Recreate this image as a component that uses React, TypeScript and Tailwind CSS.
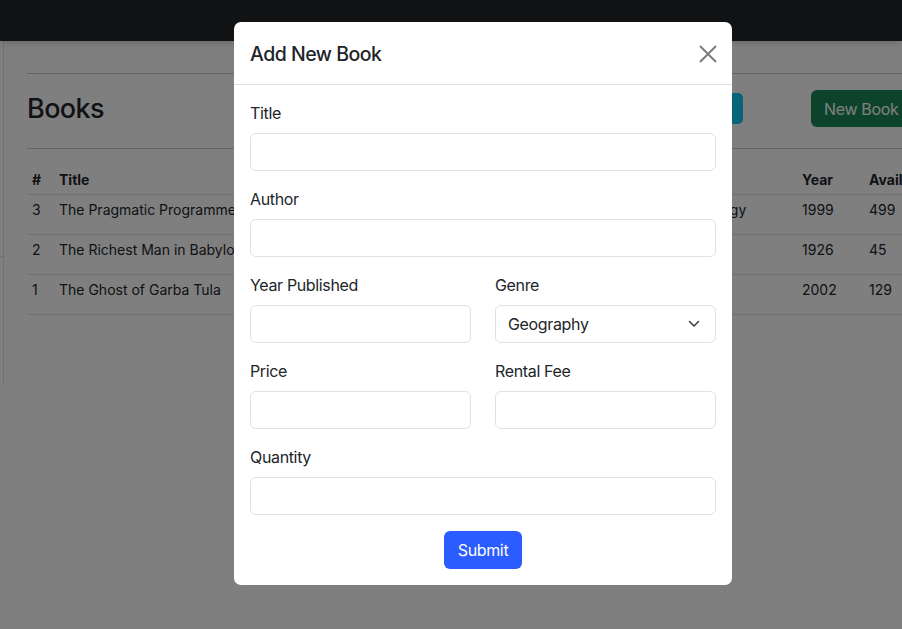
import React from "react";

const books = [
  { id: 3, title: "The Pragmatic Programmer", author: "Andrew Hunt", genre: "Technology", year: 1999, available: 499 },
  { id: 2, title: "The Richest Man in Babylon", author: "George S. Clason", genre: "Finance", year: 1926, available: 45 },
  { id: 1, title: "The Ghost of Garba Tula", author: "Yusuf Dawood", genre: "Fiction", year: 2002, available: 129 },
];

const Field: React.FC<{ label: string; children?: React.ReactNode }> = ({ label, children }) => (
  <div className="mb-4 flex-1 min-w-0">
    <label className="block mb-2 text-[16px] leading-6 tracking-[-0.35px] text-[#212529]">{label}</label>
    {children ?? (
      <input
        type="text"
        className="block w-full h-[38px] px-3 border border-[#dee2e6] rounded-[6px] bg-white outline-none"
      />
    )}
  </div>
);

export default function App() {
  return (
    <div
      className="relative w-[902px] h-[629px] overflow-hidden bg-white text-[#212529]"
      style={{ fontFamily: "Inter, 'Noto Sans', sans-serif" }}
    >
      {/* Navbar */}
      <div className="h-[41px] bg-[#212529] shadow-md relative z-10"></div>

      <div className="flex">
        {/* Collapsed sidebar */}
        <div className="w-[4px] h-[344px] border-r border-[#dee2e6] shrink-0">
          <div className="h-[216px] border-b border-[#dee2e6]"></div>
        </div>

        {/* Main content */}
        <div className="pl-[23px] pt-[32px] w-[1100px] shrink-0">
          <div className="border-t border-[#c8c9ca]"></div>
          <div className="flex items-center pt-4 pb-[21px]">
            <h3 className="w-[76px] text-[27px] leading-[34px] font-medium tracking-[-0.6px]">Books</h3>
            <div className="flex items-center ml-[540px] gap-[68px]">
              <button className="h-[31px] w-[100px] rounded-[5px] bg-[#0dcaf0] text-sm text-black">Search</button>
              <button className="h-[37px] px-[13px] rounded-[6px] bg-[#198754] text-white text-[16px] tracking-[-0.35px]">New Book</button>
            </div>
          </div>
          <div className="border-t border-[#c8c9ca]"></div>

          <table className="mt-[11px] text-[14px] border-collapse w-[1000px]">
            <thead>
              <tr className="border-b border-[#dee2e6] text-left">
                <th className="w-[27px] pl-[5px] pt-[9px] pb-[4px] leading-[21px] font-bold align-bottom">#</th>
                <th className="w-[250px] pl-[5px] pt-[9px] pb-[4px] leading-[21px] font-bold align-bottom">Title</th>
                <th className="w-[360px] pl-[5px] pt-[9px] pb-[4px] leading-[21px] font-bold align-bottom">Author</th>
                <th className="w-[133px] pl-[5px] pt-[9px] pb-[4px] leading-[21px] font-bold align-bottom">Genre</th>
                <th className="w-[67px] pl-[5px] pt-[9px] pb-[4px] leading-[21px] font-bold align-bottom">Year</th>
                <th className="w-[100px] pl-[5px] pt-[9px] pb-[4px] leading-[21px] font-bold align-bottom">Available</th>
                <th className="pl-[5px] pt-[9px] pb-[4px] leading-[21px] font-bold align-bottom">Actions</th>
              </tr>
            </thead>
            <tbody>
              {books.map((b) => (
                <tr key={b.id} className="h-[40px] border-b border-[#dee2e6]">
                  <td className="pl-[5px] pt-[4px] leading-[21px] align-top">{b.id}</td>
                  <td className="pl-[5px] pt-[4px] leading-[21px] align-top">{b.title}</td>
                  <td className="pl-[5px] pt-[4px] leading-[21px] align-top">{b.author}</td>
                  <td className="pl-[5px] pt-[4px] leading-[21px] align-top">{b.genre}</td>
                  <td className="pl-[5px] pt-[4px] leading-[21px] align-top">{b.year}</td>
                  <td className="pl-[5px] pt-[4px] leading-[21px] align-top">{b.available}</td>
                  <td className="pl-[5px] pt-[4px] leading-[21px] align-top"></td>
                </tr>
              ))}
            </tbody>
          </table>
        </div>
      </div>

      {/* Backdrop */}
      <div className="fixed inset-0 bg-black/50 z-20"></div>

      {/* Modal */}
      <div className="fixed inset-0 z-30 overflow-hidden">
        <div className="ml-[234px] mt-[22px] w-[498px] bg-white rounded-[7px] overflow-hidden">
          {/* Header */}
          <div className="flex items-center justify-between h-[63px] pt-[1px] px-4 border-b border-[#dee2e6]">
            <h5 className="text-[19.5px] leading-[30px] font-medium tracking-[-0.5px]">Add New Book</h5>
            <button aria-label="Close" className="w-[18px] h-[18px] mr-[-1px] flex items-center justify-center">
              <svg width="18" height="18" viewBox="0 0 18 18" fill="none" stroke="#7a7a7a" strokeWidth="1.9">
                <path d="M1 1 L17 17 M17 1 L1 17" />
              </svg>
            </button>
          </div>

          {/* Body */}
          <div className="p-4">
            <Field label="Title" />
            <Field label="Author" />
            <div className="flex gap-6">
              <Field label="Year Published" />
              <Field label="Genre">
                <div className="relative">
                  <select
                    defaultValue="Geography"
                    className="block w-full h-[38px] pl-3 pr-9 border border-[#dee2e6] rounded-[6px] bg-white appearance-none text-[16px] tracking-[-0.35px] text-[#212529] outline-none"
                  >
                    <option>Fiction</option>
                    <option>Finance</option>
                    <option>Geography</option>
                    <option>Technology</option>
                  </select>
                  <svg
                    className="absolute right-[16px] top-[15px] pointer-events-none"
                    width="12"
                    height="8"
                    viewBox="0 0 12 8"
                    fill="none"
                    stroke="#343a40"
                    strokeWidth="1.5"
                    strokeLinecap="round"
                    strokeLinejoin="round"
                  >
                    <path d="M1.5 1.5 L6 6 L10.5 1.5" />
                  </svg>
                </div>
              </Field>
            </div>
            <div className="flex gap-6">
              <Field label="Price" />
              <Field label="Rental Fee" />
            </div>
            <Field label="Quantity" />
            <div className="flex justify-center">
              <button className="h-[38px] w-[78px] rounded-[6px] bg-[#2b5cff] text-white text-[16px] leading-6 tracking-[-0.35px]">
                Submit
              </button>
            </div>
          </div>
        </div>
      </div>
    </div>
  );
}
